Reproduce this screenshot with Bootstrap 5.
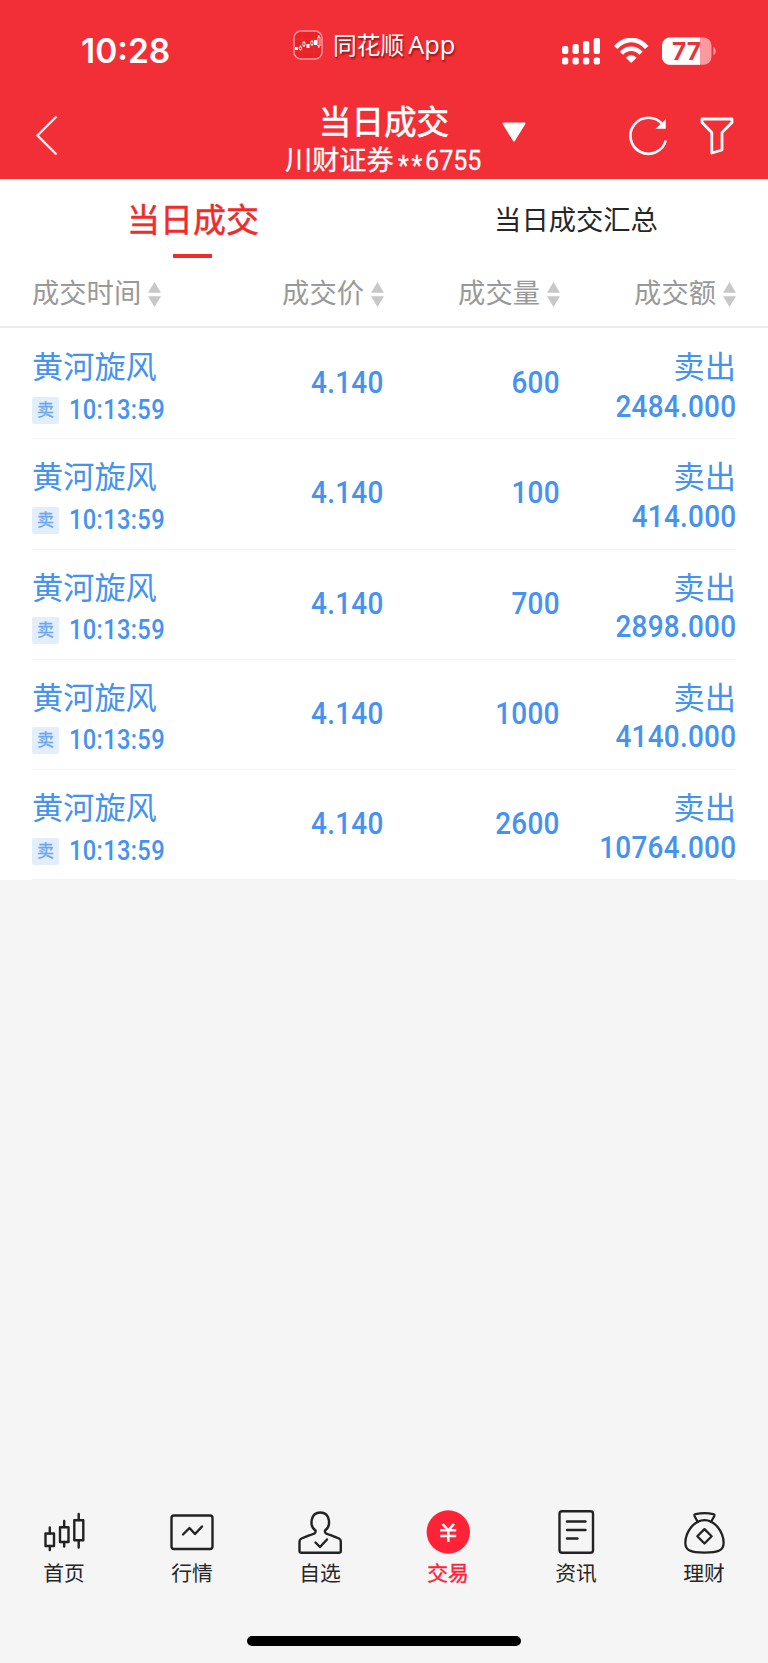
<!DOCTYPE html>
<html lang="zh-CN">
<head>
<meta charset="utf-8">
<meta name="viewport" content="width=device-width, initial-scale=1">
<title>当日成交</title>
<link href="https://cdn.jsdelivr.net/npm/bootstrap@5.3.0/dist/css/bootstrap.min.css" rel="stylesheet">
<style>
  body{background:#f5f5f5;font-family:Roboto,"Noto Sans CJK SC",sans-serif;color:#262626;height:1663px;overflow:hidden}
  svg{display:block;flex:none}
  .app-head{background:#f22f37;height:179px;color:#fff}
  .status{height:100px}
  .side{width:274px}
  .clock{font:600 33.5px/40px Inter,sans-serif;letter-spacing:0;margin:31px 0 0 81px}
  .brand{width:220px;margin-top:27px;font-size:23.7px;line-height:34px;text-shadow:1px 2px 2px rgba(90,0,0,.65);padding-left:19px}
  .brand span{margin-left:10px;white-space:pre}
  .brand b{font-weight:400;font-size:25.4px;margin-left:-2px}
  .app-name{font-family:"Open Sans","Noto Sans CJK SC",sans-serif}
  .status-icons{padding:37px 0 0 68px}
  .titles{width:220px;text-align:center;white-space:nowrap}
  .titles h1{font-size:32.6px;line-height:40px;margin:3px 0 0;font-weight:400;-webkit-text-stroke:.6px #fff}
  .titles p{font-size:27.2px;line-height:32px;margin:2px 0 0;-webkit-text-stroke:.3px #fff}
  .titles .acct{display:inline-block;transform:scaleX(.92);transform-origin:left;margin-left:-2px;margin-right:-6px}
  .titles .stars{position:relative;top:5px;letter-spacing:3px}
  .tabs{height:81px}
  .tab{width:50%;text-align:center;font-size:27.3px;line-height:40px;padding-top:22px}
  .tab.on{font-size:33px;color:#ee2c2c;-webkit-text-stroke:.5px #ee2c2c;padding-left:2px}
  .tab.on i{display:block;width:39px;height:4px;background:#ee2c2c;margin:13px auto 0;position:relative;left:-1px}
  .heads{height:68px;padding:0 32px;border-bottom:2px solid #ececec;color:#999;font-size:27.3px;line-height:40px}
  .heads span{margin-top:13.5px}
  .heads svg{margin:22px 0 0 7px}
  .deals{color:#4592ef;padding:1px 32px 0}
  .deal{height:110.25px;border-bottom:1.5px solid #f4f4f4}
  .name,.side-word{font-size:31.2px;line-height:40px;margin-top:19px}
  .figure{font-weight:500;font-size:31px;line-height:36px;letter-spacing:.3px}
  .figure span,.when span{display:inline-block;transform:scaleX(.9);transform-origin:right;white-space:nowrap}
  .mid{padding-top:36px}
  .when{font-weight:500;font-size:27.2px;line-height:28px;letter-spacing:.4px;margin-top:-1px}
  .when span{transform:scaleX(.87);transform-origin:left}
  .tag{width:27px;height:27px;background:#e3eefc;border-radius:2px;font-size:17px;line-height:27px;text-align:center;color:#6aa6f0;margin-right:10px;-webkit-text-stroke:.3px #6aa6f0}
  .bottom{height:126px}
  .item{width:128px;font-size:20.8px;line-height:30px;text-align:center}
  .item svg{margin:0 auto 5px}
  .item.on{color:#ff2338;-webkit-text-stroke:.4px #ff2338}
  .line{fill:none;stroke:#222;stroke-width:2.4;stroke-linejoin:round;stroke-linecap:round}
  .home-bar{width:274px;height:10px;border-radius:5px;background:#000;margin:0 auto 17px}
</style>
</head>
<body class="d-flex flex-column">
<header class="app-head">
  <div class="status d-flex align-items-start">
    <div class="side"><div class="clock">10:28</div></div>
    <div class="brand d-flex align-items-center">
      <svg width="30" height="30" viewBox="0 0 30 30"><rect x="1" y="1" width="28" height="28" rx="7" fill="#e92227" stroke="#f8989b" stroke-width="1.5"/><path d="M2 9H28M2 22H28M9 2V28M21 2V28" stroke="#f03a3e" stroke-width=".5"/><g fill="#fff"><path d="M2 17h3v3H2zM13.500 14h3v4h-3zM21 10h3v5h-3z"/><path d="M7.500 15.500v5M11 11v6M19 10v6M25.800 5v13" stroke="#fff"/></g><g fill="#e92227" stroke="#fff" stroke-width=".8"><path d="M6.300 17h2.200v2.500H6.300zM9.800 12.500h2.200v3H9.800zM17.800 11.500h2.200v3h-2.200zM24.800 7h2.200v9h-2.200z"/></g></svg>
      <span class="app-name">同花顺 <b>App</b></span>
    </div>
    <div class="status-icons d-flex">
      <svg width="39" height="28" viewBox="0 0 39 28" fill="#fff"><rect y="9" width="6.300" height="8" rx="2"/><rect x="10.500" y="7" width="6.300" height="10" rx="2"/><rect x="21" y="4" width="6.300" height="13" rx="2"/><rect x="31.700" y="1" width="6.300" height="16" rx="2"/><rect y="20.500" width="6.300" height="7" rx="2"/><rect x="10.500" y="20.500" width="6.300" height="7" rx="2"/><rect x="21" y="20.500" width="6.300" height="7" rx="2"/><rect x="31.700" y="20.500" width="6.300" height="7" rx="2"/></svg>
      <svg class="ms-2" style="margin-top:1px" width="44" height="27" viewBox="-5 0 44 27"><g fill="none" stroke="#fff" stroke-width="4.600"><path d="M1.700 9.500C10.500-.6 24-.6 32.700 9.500"/><path d="M7.400 15.200C12.900 9.200 21.500 9.200 27 15.200"/></g><path d="M17.200 25l-5.400-5.300q5.400-4.700 10.800 0z" fill="#fff"/></svg>
      <svg style="margin-left:9px" width="56" height="28" viewBox="0 0 56 28"><rect y="0.500" width="49.500" height="27.300" rx="8" fill="#f99a9e"/><path d="M8 .5H38v27.300H8a8 8 0 0 1-8-8V8.500a8 8 0 0 1 8-8z" fill="#fff"/><path d="M51.300 10v8q2.500-1 2.500-4t-2.500-4z" fill="#f99a9e"/><text x="24.500" y="22.800" text-anchor="middle" font-family="Inter,sans-serif" font-weight="700" font-size="24.500" fill="#e83339">77</text></svg>
    </div>
  </div>
  <div class="d-flex">
    <div class="side"><svg style="margin:15px 0 0 35px" width="24" height="42" viewBox="0 0 24 42"><path d="M21.500 1.500L2.500 20.500l19 19" fill="none" stroke="#fff" stroke-width="2.400"/></svg></div>
    <div class="titles"><h1>当日成交</h1><p>川财证券 <span class="acct"><span class="stars">**</span>6755</span></p></div>
    <div class="d-flex">
      <svg style="margin:22px 0 0 8px" width="24" height="20" viewBox="0 0 24 20"><path d="M1.500 1.500h21L12 18.500z" fill="#fff" stroke="#fff" stroke-width="2" stroke-linejoin="round"/></svg>
      <svg style="margin:16px 0 0 103px" width="40" height="42" viewBox="0 0 40 42"><path d="M33.500 8.500A18 18 0 1 0 36.800 24.500" fill="none" stroke="#fff" stroke-width="2.600"/><path d="M36 5v7h-7.500z" fill="#fff" stroke="#fff" stroke-width="1.500"/></svg>
      <svg style="margin:17px 0 0 31px" width="34" height="38" viewBox="0 0 34 38"><path d="M2 2H32V5.500L22 15.500V33L11.800 36V15.500L2 5.500z" fill="none" stroke="#fff" stroke-width="2.800" stroke-linejoin="round"/></svg>
    </div>
  </div>
</header>
<main class="bg-white">
  <div class="tabs d-flex"><div class="tab on">当日成交<i></i></div><div class="tab">当日成交汇总</div></div>
  <div class="heads row g-0" id="heads"></div>
  <div class="deals" id="deals"></div>
</main>
<nav class="bottom d-flex mt-auto">
  <div class="item"><svg width="44" height="44" viewBox="0 0 44 44"><g class="line"><rect x="3.500" y="23.500" width="8.500" height="12.500"/><path d="M7.800 17.500v6M7.800 36v4"/><rect x="18" y="17.300" width="8.500" height="14.700"/><path d="M22.200 11v6M22.200 32v4.500"/><rect x="32.300" y="10.300" width="9" height="20"/><path d="M36.700 4v6M36.700 30.500v7"/></g></svg>首页</div>
  <div class="item"><svg width="44" height="44" viewBox="0 0 44 44"><g class="line"><rect x="1.500" y="5.500" width="41" height="33.500" rx="2.500"/><path d="M13 24.500l6.500-6.500 5.500 6 7-7.500"/></g></svg>行情</div>
  <div class="item"><svg width="44" height="44" viewBox="0 0 44 44"><g class="line"><path d="M17.500 20.500C11 16 12.500 2.500 22.300 2.500S33.500 16 27 20.500C26.500 24 27.500 23 41 28.500q1.800 1 1.800 3V41q0 1.800-2 1.800H3.500q-2 0-2-1.800V31.500q0-2 2-3C17 23 18 24 17.500 20.500z"/><path d="M17.500 32.500l4.500 4.500 7-7.500"/></g></svg>自选</div>
  <div class="item on"><svg width="44" height="44" viewBox="0 0 44 44"><circle cx="22.300" cy="22" r="21.700" fill="#ff2338"/><path d="M16.500 14l5.800 6.300L28 14M14.200 20.300h16M14.200 26h16M22.300 20v12" fill="none" stroke="#fff" stroke-width="2.500"/></svg>交易</div>
  <div class="item"><svg width="44" height="44" viewBox="0 0 44 44"><g class="line"><rect x="5.500" y="1.300" width="33.500" height="41.500" rx="2.500"/><path d="M13 11.500h18.500M13 20h18.500M13 28.500h10.500"/></g></svg>资讯</div>
  <div class="item"><svg width="44" height="44" viewBox="0 0 44 46" style="overflow:visible"><g class="line"><path d="M15.500 12.500L12.200 6.500q-.8-1.800 1-2.200 9.500-2 18.500 0 1.800.4 1 2.200L29.300 12.500"/><path d="M22.500 10.500C12 10.500 2.500 22.500 2.500 34.500c0 7.500 5 10 20 10S42.500 42 42.500 34.500C42.500 22.500 33 10.500 22.500 10.500z"/><path d="M22.500 20l7.500 7.500-7.500 7.500-7.500-7.500z"/></g></svg>理财</div>
</nav>
<div class="home-bar"></div>
<script src="https://cdn.jsdelivr.net/npm/bootstrap@5.3.0/dist/js/bootstrap.bundle.min.js"></script>
<script>
  const sort='<svg width="13" height="25" viewBox="0 0 13 25" fill="#c8c8c8"><path d="M6.500 0L13 10.700H0zM0 14.300H13L6.500 25z"/></svg>';
  document.getElementById('heads').innerHTML=['成交时间','成交价','成交量','成交额'].map((t,i)=>
    `<div class="col-3 d-flex align-items-start ${i?'justify-content-end':''}"><span>${t}</span>${sort}</div>`).join('');
  const deals=[['600','2484.000'],['100','414.000'],['700','2898.000'],['1000','4140.000'],['2600','10764.000']];
  document.getElementById('deals').innerHTML=deals.map(([n,a])=>`
    <div class="deal row g-0">
      <div class="col-3"><div class="name">黄河旋风</div><div class="d-flex" style="margin-top:8.5px"><div class="tag">卖</div><div class="when"><span>10:13:59</span></div></div></div>
      <div class="col-3 text-end figure mid"><span>4.140</span></div>
      <div class="col-3 text-end figure mid"><span>${n}</span></div>
      <div class="col-3 text-end"><div class="side-word">卖出</div><div class="figure" style="margin-top:.5px"><span>${a}</span></div></div>
    </div>`).join('');
</script>
</body>
</html>
